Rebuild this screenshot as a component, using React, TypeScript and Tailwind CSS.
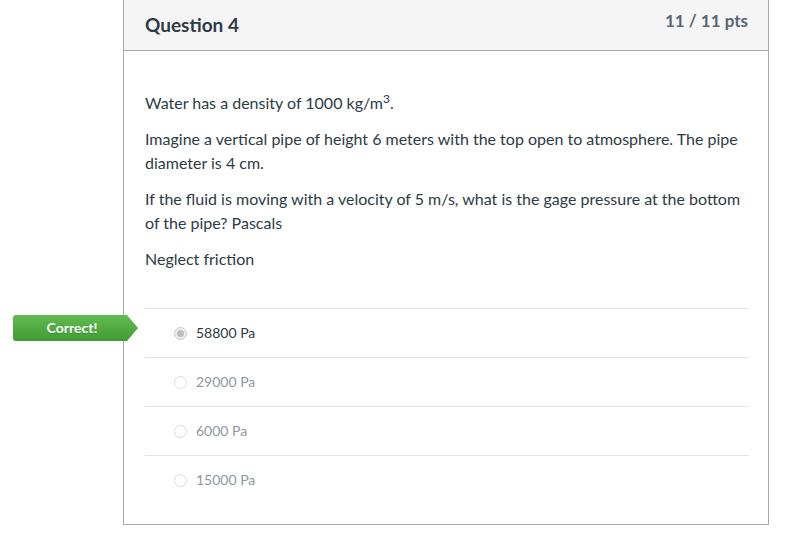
const answers = [
  { text: '58800 Pa', selected: true },
  { text: '29000 Pa', selected: false },
  { text: '6000 Pa', selected: false },
  { text: '15000 Pa', selected: false },
]

function Radio({ selected }: { selected: boolean }) {
  return (
    <span
      className={
        'flex h-[13px] w-[13px] shrink-0 items-center justify-center rounded-full border ' +
        (selected ? 'border-[#c9c9c9] bg-[#eeeeee]' : 'border-[#dcdcdc] bg-white')
      }
    >
      {selected && <span className="h-[7px] w-[7px] rounded-full bg-[#bdbdbd]" />}
    </span>
  )
}

export default function App() {
  return (
    <div className="relative min-h-[540px] w-[805px] bg-white font-['Lato',sans-serif] text-[#2d3b45]">
      <div className="ml-[123px] w-[646px] border-x border-b border-[#a8a8a8]">
        <div className="flex h-[51px] items-start justify-between border-b border-[#a8a8a8] bg-[#f5f5f5] pl-[21px] pr-5">
          <h2 className="mt-[12px] text-[19px] font-bold leading-[26px] text-[#2d3b45]">Question 4</h2>
          <span className="mt-[10px] text-[17px] font-bold leading-[22px] text-[#5b6670]">11 / 11 pts</span>
        </div>

        <div className="pl-[21px] pr-[19px] pt-[40px] pb-5">
          <div className="text-[16px] leading-[24px]">
            <p className="mb-3">
              Water has a density of 1000 kg/m<sup>3</sup>.
            </p>
            <p className="mb-3">
              Imagine a vertical pipe of height 6 meters with the top open to atmosphere. The pipe diameter is 4 cm.
            </p>
            <p className="mb-3">
              If the fluid is moving with a velocity of 5 m/s, what is the gage pressure at the bottom of the pipe?
              Pascals
            </p>
            <p>Neglect friction</p>
          </div>

          <div className="mt-[37px]">
            {answers.map((a) => (
              <div key={a.text} className="relative flex h-[49px] items-center border-t border-[#e3e3e3] pl-[29px]">
                {a.selected && (
                  <div className="absolute left-[-132px] top-[6px] flex h-[26px] w-[125px] items-center rounded-l-[3px] bg-gradient-to-b from-[#64bc4f] to-[#3e9b33] pl-[2px] pr-[9px] [clip-path:polygon(0_0,calc(100%-11px)_0,100%_50%,calc(100%-11px)_100%,0_100%)]">
                    <span className="w-full text-center text-[14px] font-bold leading-none text-white [text-shadow:0_1px_0_rgba(0,0,0,0.2)]">
                      Correct!
                    </span>
                  </div>
                )}
                <Radio selected={a.selected} />
                <span
                  className={
                    'ml-[9px] text-[14px] leading-none ' + (a.selected ? 'text-[#2d3b45]' : 'text-[#8e979e]')
                  }
                >
                  {a.text}
                </span>
              </div>
            ))}
          </div>
        </div>
      </div>
    </div>
  )
}
